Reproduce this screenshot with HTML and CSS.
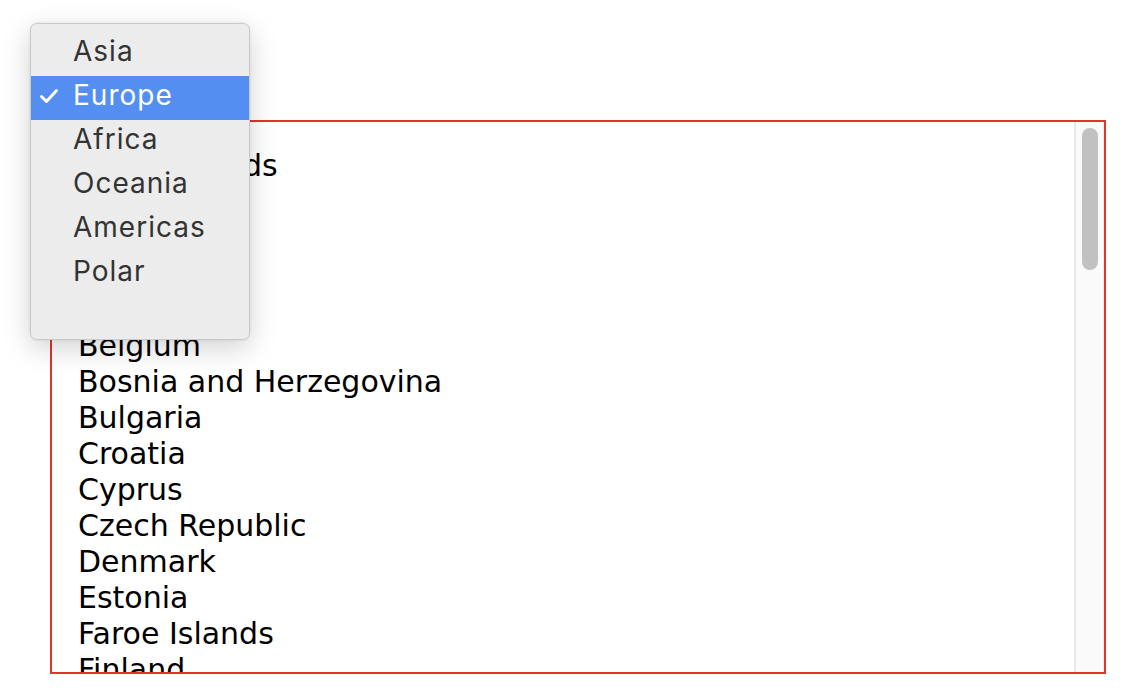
FILE: index.html
```html
<!DOCTYPE html>
<html>
<head>
<meta charset="utf-8">
<link rel="stylesheet" href="styles.css">
</head>
<body>
<div class="page">
  <div class="listbox">
    <div class="list-content">
      <div class="item">Åland Islands</div>
      <div class="item">Albania</div>
      <div class="item">Andorra</div>
      <div class="item">Austria</div>
      <div class="item">Belarus</div>
      <div class="item">Belgium</div>
      <div class="item">Bosnia and Herzegovina</div>
      <div class="item">Bulgaria</div>
      <div class="item">Croatia</div>
      <div class="item">Cyprus</div>
      <div class="item">Czech Republic</div>
      <div class="item">Denmark</div>
      <div class="item">Estonia</div>
      <div class="item">Faroe Islands</div>
      <div class="item">Finland</div>
      <div class="item">France</div>
    </div>
    <div class="scrolltrack"><div class="thumb"></div></div>
  </div>

  <div class="menu">
    <div class="opt">Asia</div>
    <div class="opt selected"><svg class="check" width="20" height="16" viewBox="0 0 20 16"><path d="M2.5 8.5 L7.5 13.5 L17.5 2.5" fill="none" stroke="#fff" stroke-width="3" stroke-linecap="round" stroke-linejoin="round"/></svg>Europe</div>
    <div class="opt">Africa</div>
    <div class="opt">Oceania</div>
    <div class="opt">Americas</div>
    <div class="opt">Polar</div>
    <div class="opt empty"></div>
  </div>
</div>
</body>
</html>
```

FILE: styles.css
```css
html, body {
  margin: 0;
  padding: 0;
  background: #ffffff;
}
.page {
  position: relative;
  width: 1130px;
  height: 698px;
  padding: 120px 0 0 50px;
  box-sizing: border-box;
}
.listbox {
  width: 1056px;
  height: 554px;
  border: 2px solid #e3342a;
  box-sizing: border-box;
  display: flex;
  overflow: hidden;
  background: #fff;
}
.list-content {
  flex: 1;
  padding: 26px 0 0 26px;
  overflow: hidden;
  font-family: "DejaVu Sans", Verdana, sans-serif;
  font-size: 30px;
  line-height: 36px;
  color: #000;
}
.item {
  height: 36px;
  white-space: nowrap;
}
.scrolltrack {
  width: 30px;
  flex: none;
  background: #fafafa;
  border-left: 2px solid #e8e8e8;
  border-right: 1px solid #ededed;
  box-sizing: border-box;
  padding: 6px 0 0 6px;
}
.thumb {
  width: 16px;
  height: 142px;
  border-radius: 8px;
  background: #c1c1c1;
}
.menu {
  position: absolute;
  left: 30px;
  top: 23px;
  width: 220px;
  height: 317px;
  box-sizing: border-box;
  background: #ececec;
  border: 1px solid #c9c9c9;
  border-radius: 7px;
  box-shadow: 0 8px 28px rgba(0,0,0,0.18), 0 0 3px rgba(0,0,0,0.08);
  padding-top: 8px;
  overflow: hidden;
  font-family: "Inter", "Liberation Sans", sans-serif;
  font-size: 28px;
  letter-spacing: 1px;
  color: #333;
}
.opt {
  height: 44px;
  line-height: 38px;
  padding-left: 42px;
  position: relative;
  white-space: nowrap;
}
.opt.selected {
  background: #548ef0;
  color: #fff;
}
.check {
  position: absolute;
  left: 8px;
  top: 12px;
}
```
